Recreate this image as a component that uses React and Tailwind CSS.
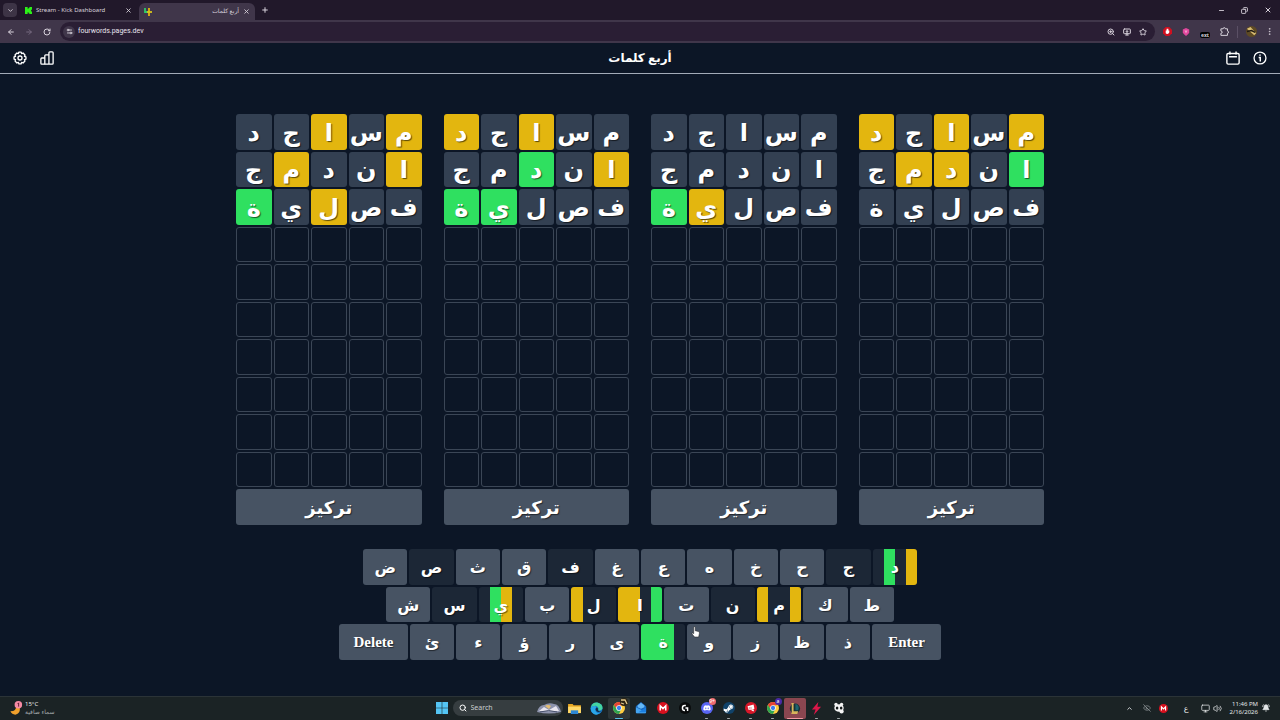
import React from "react";
import {
  ArrowLeft,
  ArrowRight,
  BellRing,
  ChevronDown,
  ChevronUp,
  Copy,
  EllipsisVertical,
  EyeOff,
  Minus,
  Monitor,
  MonitorDown,
  Plus,
  RotateCw,
  Search,
  Settings2,
  Star,
  Volume2,
  X,
  ZoomIn,
} from "lucide-react";
import { FaDiscord, FaSteamSymbol } from "react-icons/fa";

// a = absent, y = wrong spot, g = right spot
const GUESSES = ["مساجد", "اندمج", "فصلية"];

// boards from left to right, every mark string follows the reading order of the word
const BOARDS = [
  ["yayaa", "yaaya", "aayag"],
  ["aayay", "yagaa", "aaagg"],
  ["aaaaa", "aaaaa", "aaayg"],
  ["yayay", "gayya", "aaaaa"],
];

const MARKS = {
  a: "bg-[#334052]",
  y: "bg-[#e3b60f]",
  g: "bg-[#2fe060]",
};

// keys: [letter, one mark per board]; no marks = not used yet
const KEY_ROWS = [
  [["ض"], ["ص", "aaaa"], ["ث"], ["ق"], ["ف", "aaaa"], ["غ"], ["ع"], ["ه"], ["خ"], ["ح"], ["ج", "aaaa"], ["د", "agay"]],
  [["ش"], ["س", "aaaa"], ["ي", "agya"], ["ب"], ["ل", "yaaa"], ["ا", "yyag"], ["ت"], ["ن", "aaaa"], ["م", "yaay"], ["ك"], ["ط"]],
  [["ئ"], ["ء"], ["ؤ"], ["ر"], ["ى"], ["ة", "ggga"], ["و"], ["ز"], ["ظ"], ["ذ"]],
];

export default function App() {
  return (
    <div className="flex min-h-screen flex-col bg-[#0c1626] font-['Noto_Sans','DejaVu_Sans',sans-serif] text-white">
      <Browser />
      <Header />
      <main className="flex flex-1 flex-col items-center pt-10">
        <div className="grid w-full max-w-[808px] grid-cols-4 gap-[22px]">
          {BOARDS.map((marks, i) => (
            <Board key={i} marks={marks} />
          ))}
        </div>
        <Keyboard />
      </main>
      <Taskbar />
    </div>
  );
}

/* ------------- Browser chrome ------------- */
function Browser() {
  return (
    <div className="bg-[#21182a] text-[6px] text-[#d8d2dc]">
      <div className="flex h-5 items-center pl-[3px]">
        <button aria-label="Search tabs" className="flex size-[14px] items-center justify-center rounded bg-[#3d3446]">
          <ChevronDown size={7} strokeWidth={3} />
        </button>
        <div className="ml-2 flex w-[107px] items-center">
          <svg viewBox="0 0 8 8" className="size-[7px] fill-[#2cf018]">
            <path d="M0 0H3V2H4V1H5V0H8V3H7V4H6V4H7V5H8V8H5V7H4V6H3V8H0Z" />
          </svg>
          <span className="ml-1 flex-1 whitespace-nowrap">Stream - Kick Dashboard</span>
          <button aria-label="Close tab">
            <X size={7} strokeWidth={3} />
          </button>
        </div>
        <div className="ml-[7px] flex h-[17px] w-[116px] items-center self-end rounded-t-md bg-[#40364a] px-[5px]">
          <svg viewBox="0 0 8 8" className="size-2" fill="none" strokeWidth="1.8">
            <path d="M1 0V4H4" stroke="#2fc86a" />
            <path d="M5 0V8" stroke="#e3b60f" />
            <path d="M3 4H8" stroke="#d7c51b" />
          </svg>
          <span dir="rtl" className="flex-1">أربع كلمات</span>
          <button aria-label="Close tab" className="ml-1">
            <X size={7} strokeWidth={3} />
          </button>
        </div>
        <button aria-label="New tab" className="ml-1.5">
          <Plus size={8} strokeWidth={3} />
        </button>
        <div className="ml-auto flex items-center gap-4 pr-2">
          <button aria-label="Minimize"><Minus size={7} strokeWidth={3} /></button>
          <button aria-label="Restore"><Copy size={7} strokeWidth={3} className="-scale-x-100" /></button>
          <button aria-label="Close"><X size={8} strokeWidth={3} /></button>
        </div>
      </div>
      <div className="flex h-[23px] items-center bg-[#40364a] pr-1.5 pl-[7px]">
        <button aria-label="Back"><ArrowLeft size={8} strokeWidth={3} /></button>
        <button aria-label="Forward" className="ml-2.5 text-[#75697f]"><ArrowRight size={8} strokeWidth={3} /></button>
        <button aria-label="Reload" className="ml-2.5"><RotateCw size={8} strokeWidth={3} /></button>
        <div className="ml-[9px] flex h-[19px] flex-1 items-center rounded-full bg-[#2a1e34] pr-2 pl-[3px]">
          <span className="flex size-[12px] items-center justify-center rounded-full bg-[#40364a]">
            <Settings2 size={7} strokeWidth={3} />
          </span>
          <input
            aria-label="Address"
            defaultValue="fourwords.pages.dev"
            className="ml-[3px] min-w-0 flex-1 bg-transparent font-[Roboto,sans-serif] text-[7px] text-[#e9e4ee] outline-none"
          />
          <div className="flex gap-2">
            <ZoomIn size={8} strokeWidth={3} />
            <MonitorDown size={8} strokeWidth={3} />
            <Star size={8} strokeWidth={3} />
          </div>
        </div>
        <div className="ml-2 flex items-center gap-2.5">
          <svg viewBox="0 0 10 10" className="size-[9px]">
            <path d="M3 0H7L10 3V7L7 10H3L0 7V3Z" fill="#cf1020" />
            <path d="M3 4V7Q5 9 7 6V4H6V2H4V4Z" fill="#fff" />
          </svg>
          <svg viewBox="0 0 10 10" className="size-2">
            <path d="M5 0L9 2V6Q8 8 5 10Q2 8 1 6V2Z" fill="#e0479c" />
            <path d="M3 3H7L5 7Z" fill="#f39ac9" />
          </svg>
          <span className="mt-[7px] rounded-xs bg-black px-px text-[5px] leading-[6px] font-bold">ext</span>
          <svg viewBox="0 0 10 10" className="size-[9px]" fill="none" stroke="currentColor" strokeWidth="1.1" strokeLinejoin="round">
            <path d="M1 2H3.500Q3.500 .7 4.700 .7Q6 .7 6 2H8.300V4.500Q9.500 4.500 9.500 5.700Q9.500 7 8.300 7V9.300H1V7Q2.500 7 2.500 5.700Q2.500 4.500 1 4.500Z" />
          </svg>
        </div>
        <div className="ml-2 h-3 w-px bg-[#5b5065]" />
        <svg viewBox="0 0 12 12" className="ml-2 size-[11px]">
          <circle cx="6" cy="6" r="6" fill="#5e4a24" />
          <path d="M1 3L5 1L11 8L9 10Z" fill="#d8bc72" />
          <path d="M1 6L6 5L10 7" stroke="#201a14" strokeWidth="1.5" fill="none" />
        </svg>
        <button aria-label="Menu" className="ml-2"><EllipsisVertical size={9} /></button>
      </div>
    </div>
  );
}

/* ------------- Game header ------------- */
function Header() {
  return (
    <header className="grid h-[31px] grid-cols-[1fr_auto_1fr] items-center border-b border-[#a3abb8] px-[13px]">
      <div className="flex gap-[13px]">
        <button aria-label="Settings">
          <svg viewBox="0 0 16 16" className="size-[14px]" fill="none" stroke="currentColor" strokeWidth="1.5" strokeLinejoin="round">
            <path d="M6.8 1.2H9.2L9.8 2.9L11.5 2.3L13.7 4.5L13.1 6.2L14.8 6.8V9.2L13.1 9.8L13.7 11.5L11.5 13.7L9.8 13.1L9.2 14.8H6.8L6.2 13.1L4.5 13.7L2.3 11.5L2.9 9.8L1.2 9.2V6.8L2.9 6.2L2.3 4.5L4.5 2.3L6.2 2.9Z" />
            <circle cx="8" cy="8" r="2.3" />
          </svg>
        </button>
        <button aria-label="Statistics">
          <svg viewBox="0 0 16 16" className="size-[14px]" fill="none" stroke="currentColor" strokeWidth="1.5" strokeLinejoin="round">
            <path d="M5.500 8H2Q1 8 1 9V14Q1 15 2 15H14Q15 15 15 14V2Q15 1 14 1H11.200Q10.200 1 10.200 2V15" />
            <path d="M5.500 15V5.500Q5.500 4.500 6.500 4.500H10.200" />
          </svg>
        </button>
      </div>
      <h1 dir="rtl" className="text-xs leading-5 font-bold">أربع كلمات</h1>
      <div className="flex justify-end gap-[13px]">
        <button aria-label="Daily puzzles">
          <svg viewBox="0 0 16 16" className="size-[14px]" fill="none" stroke="currentColor" strokeWidth="1.6" strokeLinejoin="round">
            <rect x="1" y="2.800" width="14" height="12.200" rx="1.500" />
            <path d="M4.5 0.5V4M11.5 0.5V4M3.500 6.500H12.500" />
          </svg>
        </button>
        <button aria-label="About">
          <svg viewBox="0 0 16 16" className="size-[14px]" fill="none" stroke="currentColor" strokeWidth="1.5">
            <circle cx="8" cy="8" r="6.8" />
            <path d="M6.5 7.5H8.3V12M8 4V5.5" strokeWidth="1.7" />
          </svg>
        </button>
      </div>
    </header>
  );
}

/* ------------- One board ------------- */
function Board({ marks }) {
  const rows = Array.from({ length: 10 });

  return (
    <section className="flex flex-col gap-0.5">
      <div dir="rtl" className="grid grid-cols-5 gap-0.5">
        {rows.map((_, r) =>
          Array.from({ length: 5 }).map((_, c) =>
            GUESSES[r] ? (
              <div
                key={`${r}-${c}`}
                className={`flex aspect-square items-center justify-center rounded-[3px] text-2xl leading-8 font-bold [text-shadow:1px_1px_1px_#00000099] ${MARKS[marks[r][c]]}`}
              >
                {GUESSES[r][c]}
              </div>
            ) : (
              <div key={`${r}-${c}`} className="aspect-square rounded-[3px] border border-[#3b4656]" />
            )
          )
        )}
      </div>
      <button className="flex h-9 items-center justify-center rounded-[3px] bg-[#475363] text-lg leading-8 font-bold [text-shadow:1px_1px_1px_#00000080]">
        تركيز
      </button>
    </section>
  );
}

/* ------------- Keyboard ------------- */
function Keyboard() {
  return (
    <div className="mt-6 flex h-[111px] w-full max-w-[602px] flex-col items-center gap-0.5">
      <div className="flex w-full max-w-[554px] flex-1 gap-0.5">
        {KEY_ROWS[0].map(([letter, marks]) => (
          <Key key={letter} letter={letter} marks={marks} />
        ))}
      </div>
      <div className="flex w-full max-w-[508px] flex-1 gap-0.5">
        {KEY_ROWS[1].map(([letter, marks]) => (
          <Key key={letter} letter={letter} marks={marks} />
        ))}
      </div>
      <div className="flex w-full flex-1 gap-0.5">
        <WideKey label="Delete" />
        {KEY_ROWS[2].map(([letter, marks]) => (
          <Key key={letter} letter={letter} marks={marks} pointer={letter === "و"} />
        ))}
        <WideKey label="Enter" />
      </div>
    </div>
  );
}

function Key({ letter, marks, pointer }) {
  return (
    <button
      className={`relative flex flex-1 items-center justify-center rounded-[3px] text-base leading-6 font-bold [text-shadow:1px_1px_1px_#00000080] ${marks ? "bg-[#1c2736]" : "bg-[#475363]"}`}
    >
      {marks && (
        <span className="absolute inset-0 grid grid-cols-4 overflow-hidden rounded-[3px]">
          {marks.split("").map((m, i) => (
            <span key={i} className={m === "a" ? "" : MARKS[m]} />
          ))}
        </span>
      )}
      <span className="relative">{letter}</span>
      {pointer && (
        <svg viewBox="0 0 10 14" className="absolute top-0.5 left-1 h-[13px] w-[9px]">
          <path
            d="M3 1Q4 0 4.7 1V5L8.5 6Q9.5 6.5 9.3 8L8.5 12H4L1 8.5Q1 7.3 2 7.5L3 8.3Z"
            fill="#fff"
            stroke="#222"
            strokeWidth="0.6"
          />
        </svg>
      )}
    </button>
  );
}

function WideKey({ label }) {
  return (
    <button className="w-[69px] rounded-[3px] bg-[#475363] font-['Liberation_Serif',serif] text-[15px] leading-5 font-bold [text-shadow:1px_1px_1px_#00000080]">
      {label}
    </button>
  );
}

/* ------------- Windows taskbar ------------- */
function Taskbar() {
  return (
    <footer className="grid h-6 grid-cols-[1fr_auto_1fr] items-center border-t border-[#2b3337] bg-[#1b2325] pb-px text-[6px] leading-2">
      <div className="flex items-center gap-0.5 pl-[9px]">
        <svg viewBox="0 0 14 16" className="h-[15px] w-[14px]">
          <path d="M7 4Q8 11 1 11Q3 15 7 14.500Q12 13 11 7Z" fill="#f0a02c" />
          <circle cx="9.500" cy="4" r="4" fill="#f58aa5" />
          <path d="M8.800 3L9.800 2V6" stroke="#5b1c30" fill="none" />
        </svg>
        <div className="text-[#e4e7e8]">
          <div>15°C</div>
          <div dir="rtl" className="text-[#a5abad]">سماء صافية</div>
        </div>
      </div>

      <div className="flex items-center">
        <TaskIcon label="Start">
          <svg viewBox="0 0 12 12" className="size-3 fill-[#54c4f3]">
            <path d="M0 0H5.700V5.700H0ZM6.300 0H12V5.700H6.300ZM0 6.300H5.700V12H0ZM6.300 6.300H12V12H6.300Z" />
          </svg>
        </TaskIcon>
        <label className="mr-px flex h-4 w-[110px] items-center rounded-full bg-[#363d40] pr-0.5 pl-1.5">
          <Search size={8} strokeWidth={3} />
          <input
            aria-label="Search"
            placeholder="Search"
            className="ml-1 min-w-0 flex-1 bg-transparent text-[7px] outline-none placeholder:text-[#c8cdcf]"
          />
          <svg viewBox="0 0 24 12" className="h-3 w-6">
            <path d="M0 10Q2 3 7 3Q12 0 17 2Q22 2 24 10Q12 13 0 10Z" fill="#8d93ac" />
            <path d="M2 9L7 5L12 8L19 4L22 9Z" fill="#e8e5ee" />
            <path d="M8 4Q11 2 14 4L12 7Z" fill="#e4be73" />
            <path d="M3 10Q12 7 20 10" stroke="#48516c" fill="none" />
          </svg>
        </label>
        <TaskIcon label="File Explorer">
          <svg viewBox="0 0 14 12" className="h-[11px] w-[13px]">
            <path d="M0 1H5L6 2.500H14V11H0Z" fill="#e7a824" />
            <path d="M0 4H14V11H0Z" fill="#ffd968" />
            <path d="M3 8H11V12H3Z" fill="#2c87d4" />
          </svg>
        </TaskIcon>
        <TaskIcon label="Edge">
          <svg viewBox="0 0 14 14" className="size-[13px]">
            <circle cx="7" cy="7" r="6.500" fill="#1679c9" />
            <path d="M1 6Q2 0 8 .5Q14 2 13.500 7Q12 10 9 9Q10 5 6 4Q3 4 1 6Z" fill="#43d4a1" />
            <path d="M1 6Q4 3 7 5Q4 8 7 11Q9 13 12 11Q8 15 4 13Q0 10 1 6Z" fill="#2aa7e8" />
            <path d="M7 6Q9 6 8.500 9Q10 11 13 9Q10 12 7 10Q5 8 7 6Z" fill="#132a42" />
          </svg>
        </TaskIcon>
        <TaskIcon label="Chrome" className="rounded-xs bg-[#2d3537]" dot="w-[8px] bg-[#58bfe8]">
          <ChromeLogo />
          <svg viewBox="0 0 8 8" className="absolute top-0 right-0.5 size-2">
            <circle cx="4" cy="4" r="4" fill="#2c2414" />
            <path d="M1 2L5 2L7 6M1 5L4 6" stroke="#e0c78d" strokeWidth="1.300" fill="none" />
          </svg>
        </TaskIcon>
        <TaskIcon label="Mail">
          <svg viewBox="0 0 14 14" className="size-3">
            <path d="M1 5L7 0L13 5V12Q13 13 12 13H2Q1 13 1 12Z" fill="#1565bd" />
            <path d="M3 4L7 1L11 4V6L7 8L3 6Z" fill="#64b7f4" />
            <path d="M1 6L13 12Q13 13 12 13H2Q1 13 1 12Z" fill="#45a5f0" />
            <path d="M13 6L4 12H12Q13 12 13 11Z" fill="#1b7ee0" />
          </svg>
        </TaskIcon>
        <TaskIcon label="Mega">
          <MegaLogo className="size-3" />
        </TaskIcon>
        <TaskIcon label="Logitech G Hub">
          <svg viewBox="0 0 14 14" className="size-3">
            <circle cx="7" cy="7" r="7" fill="#090b0c" />
            <path d="M8 4H6.500Q4 4 4 7Q4 10 7 10M7.500 7H10V10.500" stroke="#fff" strokeWidth="1.700" fill="none" />
          </svg>
        </TaskIcon>
        <TaskIcon label="Discord" dot="w-[3px] bg-[#a3a9ab]">
          <span className="flex size-3 items-center justify-center rounded-full bg-[#5865f2]">
            <FaDiscord size={8} />
          </span>
          <span className="absolute top-0 right-0.5 flex size-[7px] items-center justify-center rounded-full bg-[#ef6b70] text-[5px]">9+</span>
        </TaskIcon>
        <TaskIcon label="Steam" dot="w-[3px] bg-[#a3a9ab]">
          <span className="flex size-3 items-center justify-center rounded-full bg-[#104269]">
            <FaSteamSymbol size={11} />
          </span>
        </TaskIcon>
        <TaskIcon label="Riot Client" dot="w-[3px] bg-[#a3a9ab]">
          <svg viewBox="0 0 14 14" className="size-3">
            <circle cx="7" cy="7" r="7" fill="#d81729" />
            <path d="M3 5L10 3L11 8L9 9H4ZM7 9.500L10.500 9L10 11Z" fill="#fff" />
            <path d="M5 6V8M7 6V8" stroke="#d81729" strokeWidth=".7" />
          </svg>
        </TaskIcon>
        <TaskIcon label="Chrome, second profile" dot="w-[3px] bg-[#a3a9ab]">
          <ChromeLogo />
          <span className="absolute top-0 right-0.5 flex size-[7px] items-center justify-center rounded-full bg-[#4a2aa6] text-[5px]">a</span>
        </TaskIcon>
        <TaskIcon label="League of Legends" className="rounded-xs bg-[#8b4650]" dot="w-4 bg-[#f599a3]">
          <svg viewBox="0 0 14 14" className="size-[13px]">
            <circle cx="7.500" cy="7" r="5.500" fill="#173236" />
            <path d="M3 1H7L6 2V10H11L10 13H3L4 12V2Z" fill="#d7b45b" />
            <path d="M8 2Q13 4 11 9H8Z" fill="#1d6470" />
          </svg>
        </TaskIcon>
        <TaskIcon label="Lightning" dot="w-[3px] bg-[#a3a9ab]">
          <svg viewBox="0 0 12 14" className="h-[13px] w-[11px]">
            <path d="M8 0L1 8H5L3 14L11 5H7Z" fill="#dc1749" />
          </svg>
        </TaskIcon>
        <TaskIcon label="Panda" dot="w-[3px] bg-[#a3a9ab]">
          <svg viewBox="0 0 14 14" className="size-3">
            <circle cx="3.500" cy="3" r="2" fill="#f4f4f4" />
            <circle cx="10" cy="2.800" r="2" fill="#f4f4f4" />
            <ellipse cx="7" cy="7" rx="5.500" ry="4.500" fill="#f4f4f4" />
            <circle cx="10" cy="11" r="2.500" fill="#f4f4f4" />
            <ellipse cx="4.800" cy="7" rx="1.500" ry="1.800" fill="#14191a" />
            <ellipse cx="9.500" cy="7" rx="1.500" ry="1.800" fill="#14191a" />
          </svg>
        </TaskIcon>
      </div>

      <div className="flex items-center justify-end pr-2.5 text-[#e4e7e8]">
        <ChevronUp size={7} strokeWidth={3} />
        <EyeOff size={8} className="ml-2.5 text-[#9ba2a5]" />
        <MegaLogo className="ml-2 size-[9px]" />
        <span className="ml-4 text-[8px]">ع</span>
        <Monitor size={9} className="ml-3" />
        <Volume2 size={9} className="ml-[3px]" />
        <div className="ml-2 text-right">
          <div>11:46 PM</div>
          <div>2/16/2026</div>
        </div>
        <BellRing size={8} fill="currentColor" className="ml-1" />
      </div>
    </footer>
  );
}

function TaskIcon({ label, className = "", dot, children }) {
  return (
    <button aria-label={label} className={`relative flex h-[21px] w-[22px] items-center justify-center ${className}`}>
      {children}
      {dot && <span className={`absolute inset-x-0 bottom-0 mx-auto h-px rounded-full ${dot}`} />}
    </button>
  );
}

function ChromeLogo() {
  return (
    <svg viewBox="0 0 14 14" className="size-3">
      <circle cx="7" cy="7" r="7" fill="#ffcd40" />
      <path d="M1 3.500A7 7 0 0 1 13.100 3.500L7 4.200L4.300 8.500Z" fill="#e64335" />
      <path d="M1 3.500L4.300 8.500L9.600 8.500L7 14A7 7 0 0 1 1 3.500Z" fill="#2fa552" />
      <circle cx="7" cy="7" r="3.300" fill="#fff" />
      <circle cx="7" cy="7" r="2.500" fill="#3b7ded" />
    </svg>
  );
}

function MegaLogo({ className }) {
  return (
    <svg viewBox="0 0 14 14" className={className} fill="none">
      <circle cx="7" cy="7" r="7" fill="#d9101e" />
      <path d="M3.800 10V4.500L7 7.700L10.200 4.500V10" stroke="#fff" strokeWidth="1.800" />
    </svg>
  );
}
